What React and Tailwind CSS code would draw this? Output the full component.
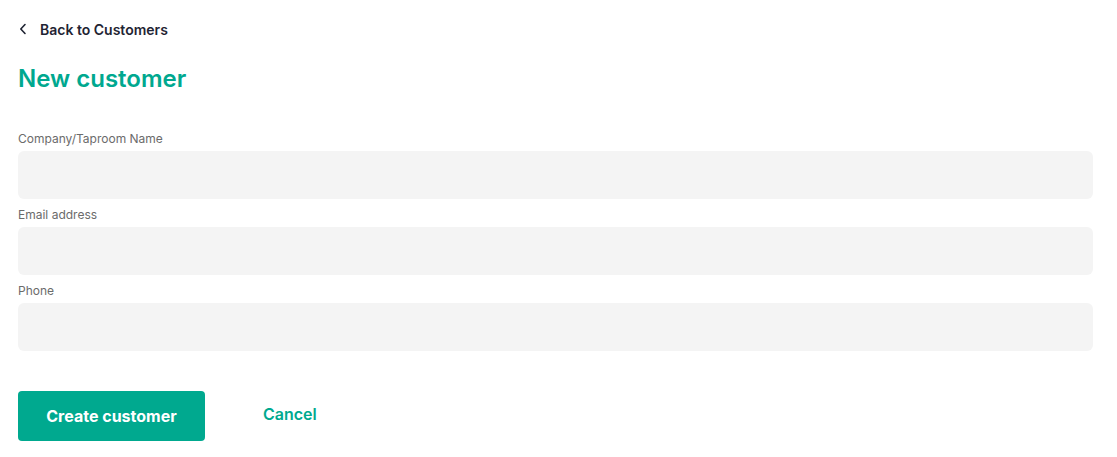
import React from "react";

const fields = [
  { label: "Company/Taproom Name", type: "text" },
  { label: "Email address", type: "email" },
  { label: "Phone", type: "tel" },
];

const App = () => {
  return (
    <div className="min-h-screen bg-white pl-[18px] pr-[24px] pt-[19px] font-['Inter',_'Liberation_Sans',_sans-serif]">
      <a href="#" className="flex items-center h-5 text-[14px] font-semibold text-[#1f2433]">
        <svg width="8" height="12" viewBox="0 0 8 12" fill="none" className="ml-[1px] mr-[13px]">
          <path d="M6 1.5L1.8 6 6 10.5" stroke="#1f2433" strokeWidth="1.6" strokeLinecap="round" strokeLinejoin="round" />
        </svg>
        Back to Customers
      </a>

      <h1 className="mt-6 h-8 leading-8 text-[24px] font-semibold text-[#00a88f]">New customer</h1>

      <form className="mt-9 flex flex-col">
        {fields.map((field, index) => (
          <div key={index} className="mb-2">
            <label className="block h-4 leading-4 text-[12px] text-[#6b6b6b]">{field.label}</label>
            <input type={field.type} className="mt-1 block w-full h-12 rounded-md bg-[#f4f4f4] px-4 outline-none" />
          </div>
        ))}

        <div className="mt-8 flex items-center">
          <button type="button" className="w-[187px] h-[50px] rounded-[4px] bg-[#00a98f] text-white text-[16px] font-bold">
            Create customer
          </button>
          <button type="button" className="ml-[58px] mb-1 text-[16px] font-semibold text-[#00a98f]">
            Cancel
          </button>
        </div>
      </form>
    </div>
  );
};

export default App;
